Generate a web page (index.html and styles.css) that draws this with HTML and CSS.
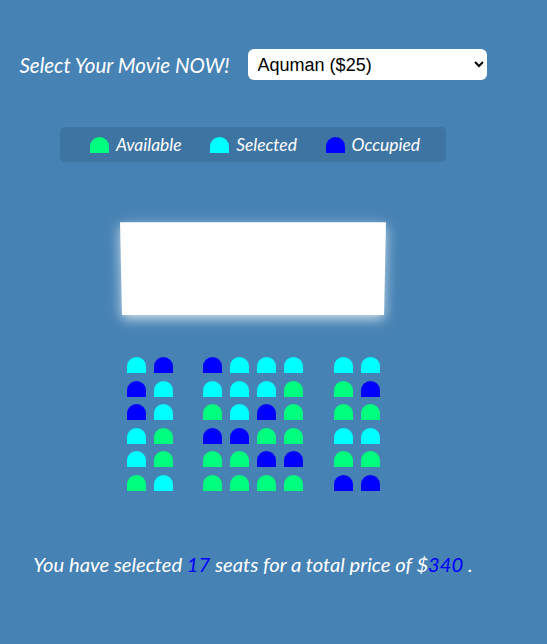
FILE: index.html
```html
<!DOCTYPE html>
<html lang="en">
<head>
<meta charset="UTF-8">
<title>Movie Seat Booking</title>
<link rel="stylesheet" href="styles.css">
</head>
<body>
<div class="app">
  <div class="movie-container">
    <label class="movie-label" for="movie">Select Your Movie NOW!</label>
    <select id="movie" class="movie-select">
      <option value="25">Aquman ($25)</option>
      <option value="20">Joker ($20)</option>
      <option value="15">Toy Story 4 ($15)</option>
    </select>
  </div>

  <ul class="showcase">
    <li class="showcase-item"><div class="seat seat-available"></div><small>Available</small></li>
    <li class="showcase-item"><div class="seat seat-selected"></div><small>Selected</small></li>
    <li class="showcase-item"><div class="seat seat-occupied"></div><small>Occupied</small></li>
  </ul>

  <div class="theater">
    <div class="screen"></div>

    <div class="row">
      <div class="seat s"></div><div class="seat o"></div>
      <div class="seat o"></div><div class="seat s"></div><div class="seat s"></div><div class="seat s"></div>
      <div class="seat s"></div><div class="seat s"></div>
    </div>
    <div class="row">
      <div class="seat o"></div><div class="seat s"></div>
      <div class="seat s"></div><div class="seat s"></div><div class="seat s"></div><div class="seat a"></div>
      <div class="seat a"></div><div class="seat o"></div>
    </div>
    <div class="row">
      <div class="seat o"></div><div class="seat s"></div>
      <div class="seat a"></div><div class="seat s"></div><div class="seat o"></div><div class="seat a"></div>
      <div class="seat a"></div><div class="seat a"></div>
    </div>
    <div class="row">
      <div class="seat s"></div><div class="seat a"></div>
      <div class="seat o"></div><div class="seat o"></div><div class="seat a"></div><div class="seat a"></div>
      <div class="seat s"></div><div class="seat s"></div>
    </div>
    <div class="row">
      <div class="seat s"></div><div class="seat a"></div>
      <div class="seat a"></div><div class="seat a"></div><div class="seat o"></div><div class="seat o"></div>
      <div class="seat a"></div><div class="seat a"></div>
    </div>
    <div class="row">
      <div class="seat a"></div><div class="seat s"></div>
      <div class="seat a"></div><div class="seat a"></div><div class="seat a"></div><div class="seat a"></div>
      <div class="seat o"></div><div class="seat o"></div>
    </div>
  </div>

  <p class="summary">You have selected <span class="num">17</span> seats for a total price of $<span class="num">340</span> .</p>
</div>
</body>
</html>
```

FILE: styles.css
```css
* {
  box-sizing: border-box;
}

body {
  margin: 0;
  background-color: steelblue;
  color: #fff;
  font-family: Lato, "Open Sans", sans-serif;
  font-style: italic;
  min-height: 644px;
}

.app {
  width: 506px;
  display: flex;
  flex-direction: column;
  align-items: center;
}

.movie-container {
  display: flex;
  align-items: center;
  margin-top: 49px;
  gap: 18px;
}

.movie-label {
  font-size: 20.6px;
}

.movie-select {
  width: 239px;
  height: 31px;
  border: 0;
  border-radius: 6px;
  background: #fff;
  font-family: "Liberation Sans", Arial, sans-serif;
  font-style: normal;
  font-size: 18px;
  color: #000;
  padding: 0 6px;
}

.showcase {
  list-style: none;
  margin: 47px 0 0;
  padding: 0 26px 0 30px;
  width: 386px;
  height: 35px;
  display: flex;
  align-items: center;
  justify-content: space-between;
  background: rgba(0, 0, 0, 0.1);
  border-radius: 5px;
}

.showcase-item {
  display: flex;
  align-items: center;
}

.showcase-item small {
  font-size: 17.4px;
  margin-left: 7px;
}

.seat {
  width: 19px;
  height: 16px;
  margin: 4px;
  border-top-left-radius: 10px;
  border-top-right-radius: 10px;
}

.showcase-item .seat {
  margin: 0;
}

.seat-available, .a { background: springgreen; }
.seat-selected, .s { background: aqua; }
.seat-occupied, .o { background: blue; }

.theater {
  width: 262px;
  margin-top: 60px;
  display: flex;
  flex-direction: column;
  align-items: center;
}

.screen {
  width: 264px;
  height: 94px;
  background: #fff;
  transform: perspective(1000px) rotateX(-9deg);
  box-shadow: 0 4px 12px rgba(255, 255, 255, 0.75);
  margin-bottom: 37px;
}

.row {
  display: flex;
  margin-bottom: -0.5px;
}

.row .seat:nth-child(2) {
  margin-right: 26px;
}

.row .seat:nth-last-child(2) {
  margin-left: 27px;
}

.summary {
  margin: 58px 0 0;
  font-size: 20.2px;
}

.num {
  color: blue;
}
```
